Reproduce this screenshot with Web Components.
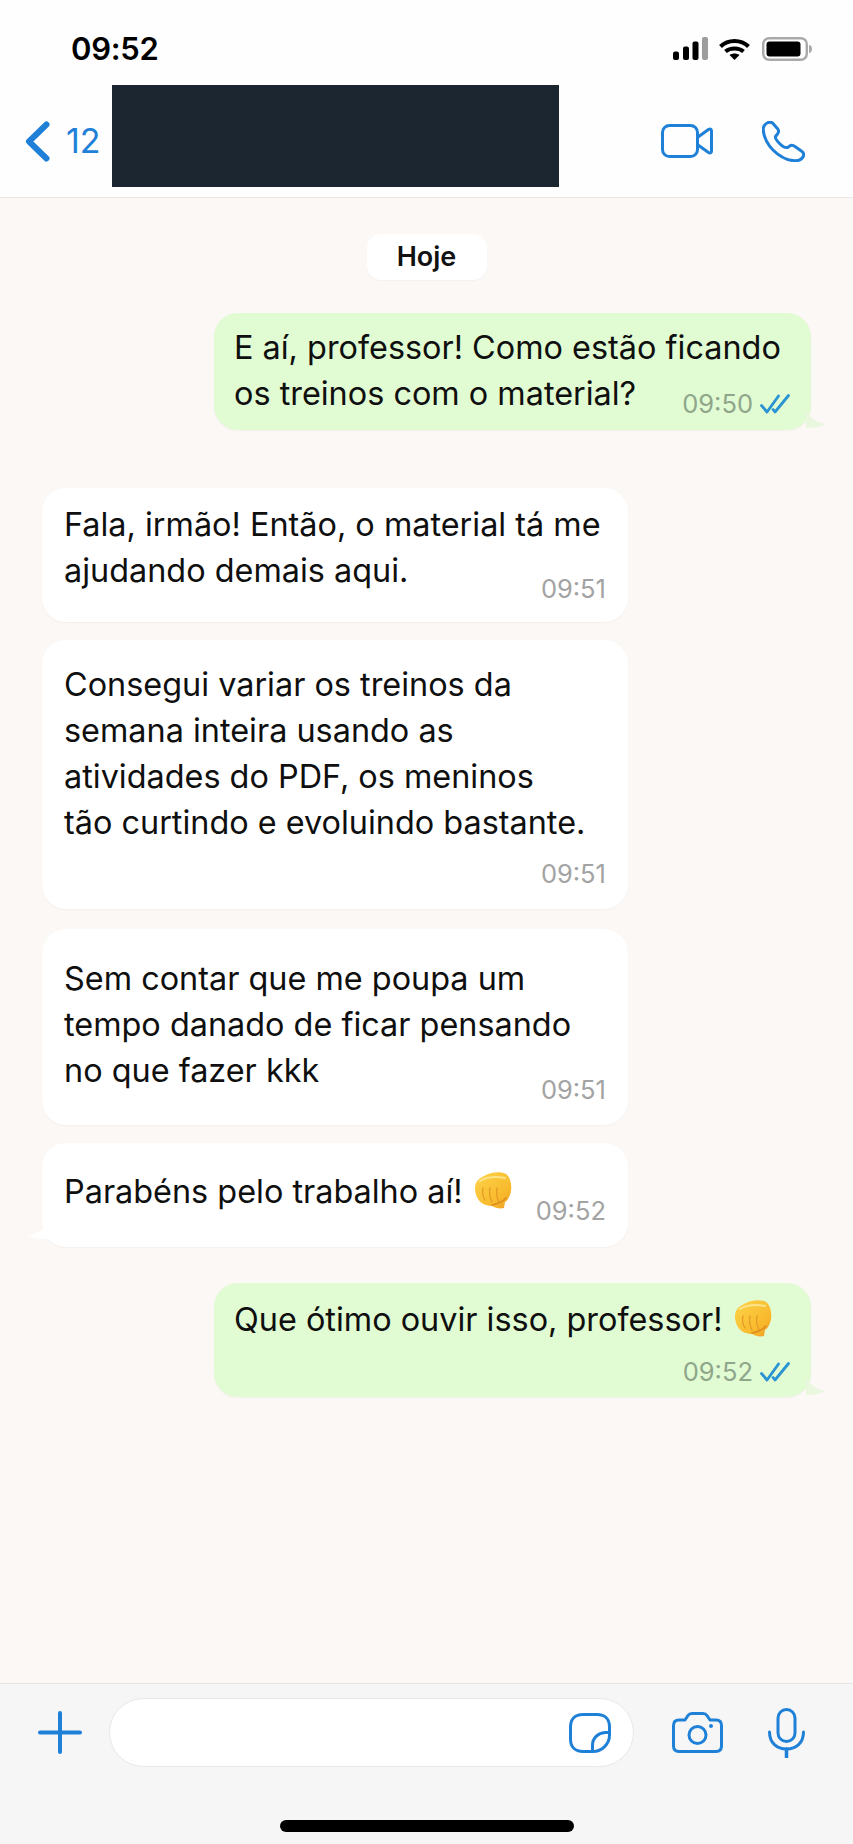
<!DOCTYPE html>
<html lang="pt-BR">
<head>
<meta charset="utf-8">
<title>Conversa</title>
<style>
  html, body { margin: 0; height: 100%; }
  body { font-family: Inter, "Liberation Sans", sans-serif; color: #0e0f0e; overflow: hidden; }
  wa-app { height: 1844px; }
</style>
</head>
<body>
<wa-app>
  <status-bar slot="top" time="09:52"></status-bar>
  <chat-header slot="top" count="12"></chat-header>

  <date-pill>Hoje</date-pill>

  <chat-bubble side="out" time="09:50" tail style="margin-top:33px;--top:12px;--bottom:14px;--meta:-26px">E aí, professor! Como estão ficando<br>os treinos com o material?</chat-bubble>

  <chat-bubble side="in" time="09:51" style="margin-top:58px;--top:14px;--bottom:21px;--meta:-18px">Fala, irmão! Então, o material tá me<br>ajudando demais aqui.</chat-bubble>
  <chat-bubble side="in" time="09:51" style="margin-top:18px;--top:22px;--bottom:23px;--meta:15px">Consegui variar os treinos da<br>semana inteira usando as<br>atividades do PDF, os meninos<br>tão curtindo e evoluindo bastante.</chat-bubble>
  <chat-bubble side="in" time="09:51" style="margin-top:20px;--top:27px;--bottom:23px;--meta:-17px">Sem contar que me poupa um<br>tempo danado de ficar pensando<br>no que fazer kkk</chat-bubble>
  <chat-bubble side="in" time="09:52" tail style="margin-top:18px;--top:26px;--bottom:24px;--meta:-17px">Parabéns pelo trabalho aí! <fist-emoji></fist-emoji></chat-bubble>

  <chat-bubble side="out" time="09:52" tail style="margin-top:36px;--top:14px;--bottom:13px;--meta:16px">Que ótimo ouvir isso, professor! <fist-emoji></fist-emoji></chat-bubble>

  <chat-composer slot="bottom"></chat-composer>
</wa-app>

<script>
class WaApp extends HTMLElement {
  connectedCallback() {
    this.attachShadow({ mode: 'open' });
    this.shadowRoot.innerHTML = `
      <style>
        :host { display: flex; flex-direction: column; width: 853px; background: #fbf8f5; }
        .log {
          flex: 1;
          display: flex;
          flex-direction: column;
          padding: 36px 42px 0 42px;
          min-height: 0;
        }
      </style>
      <slot name="top"></slot>
      <div class="log"><slot></slot></div>
      <slot name="bottom"></slot>
    `;
  }
}

class StatusBar extends HTMLElement {
  connectedCallback() {
    this.attachShadow({ mode: 'open' });
    this.shadowRoot.innerHTML = `
      <style>
        :host { display: flex; height: 70px; box-sizing: border-box; padding: 37px 41px 0 71px; background: #fefefe; }
        .time { font-size: 31px; font-weight: 600; line-height: 24px; color: #000; letter-spacing: -0.3px; }
        .icons { margin-left: auto; display: flex; align-items: flex-start; }
        svg { display: block; }
        .wifi { margin-left: 11px; }
        .battery { margin-left: 12px; }
      </style>
      <div class="time">${this.getAttribute('time')}</div>
      <div class="icons">
        <svg width="35" height="23" viewBox="0 0 35 23">
          <rect x="0" y="14.5" width="6" height="8.5" rx="2" fill="#000"/>
          <rect x="10" y="9.5" width="6" height="13.5" rx="2" fill="#000"/>
          <rect x="19.5" y="4.5" width="6" height="18.5" rx="2" fill="#000"/>
          <rect x="29" y="0" width="6" height="23" rx="2" fill="#9d9d9d"/>
        </svg>
        <svg class="wifi" width="31" height="23" viewBox="0 0 31 23" fill="none" stroke="#000" stroke-width="4">
          <path d="M1.5 9.5C9 2 22 2 29.5 9.5"/>
          <path d="M6.5 14.5C11 10.5 20 10.5 24.5 14.5"/>
          <path d="M10.5 18C13.5 16 17.5 16 20.5 18L15.5 23Z" fill="#000" stroke="none"/>
        </svg>
        <svg class="battery" width="50" height="24" viewBox="0 0 50 24">
          <rect x="1.2" y="1.2" width="43.6" height="21.6" rx="6" fill="none" stroke="#a9a9a9" stroke-width="2.4"/>
          <rect x="4.5" y="4.5" width="34" height="15" rx="3" fill="#000"/>
          <path d="M47 8c2 0 3 2 3 4s-1 4-3 4z" fill="#a9a9a9"/>
        </svg>
      </div>
    `;
  }
}

class ChatHeader extends HTMLElement {
  connectedCallback() {
    this.attachShadow({ mode: 'open' });
    this.shadowRoot.innerHTML = `
      <style>
        :host {
          display: flex;
          align-items: center;
          height: 128px;
          box-sizing: border-box;
          padding: 15px 0 0 25px;
          background: #fefefe;
          border-bottom: 1px solid #e9e7e4;
          color: #1f80d8;
        }
        svg { display: block; flex: none; }
        .count { margin-left: 16px; width: 46px; font-size: 34px; line-height: 40px; }
        .name { align-self: flex-start; width: 447px; height: 102px; background: #1c2630; }
        .video { margin-left: 102px; }
        .phone { margin-left: 49px; }
      </style>
      <svg width="25" height="41" viewBox="0 0 25 41" fill="none" stroke="currentColor" stroke-width="6" stroke-linecap="round" stroke-linejoin="round">
        <path d="M21.5 3.5L4 20.5L21.5 37.5"/>
      </svg>
      <span class="count">${this.getAttribute('count')}</span>
      <div class="name"></div>
      <svg class="video" width="52" height="34" viewBox="0 0 52 34" fill="none" stroke="currentColor" stroke-width="3" stroke-linejoin="round">
        <rect x="1.5" y="1.5" width="35" height="31" rx="7"/>
        <path d="M37 13L47.5 5.5C49.5 4.4 50.5 5.5 50.5 7V27C50.5 28.5 49.5 29.6 47.5 28.5L37 21"/>
      </svg>
      <svg class="phone" width="43" height="41" viewBox="0 0 43 41" fill="none" stroke="currentColor" stroke-width="3" stroke-linejoin="round">
        <path d="M6 1.5C3 3 1 5.5 1.2 9C1.8 15 5 23 11 29C17 35 25 39.5 33 39.8C37 40 40 38 41.5 35C42 33 41.5 31.5 40 30.5L33 25.5C31 24 29 24 27.5 25.2L25.5 26.5C23 27 20 25 17.5 22.5C15 20 13 17 13.5 15.5L15.5 13C16.8 11.3 16.8 9.5 15.8 8L11 2.5C9.8 1.2 7.8 1 6 1.5Z"/>
      </svg>
    `;
  }
}

class DatePill extends HTMLElement {
  connectedCallback() {
    this.attachShadow({ mode: 'open' });
    this.shadowRoot.innerHTML = `
      <style>
        :host {
          display: block;
          align-self: center;
          width: 120px;
          height: 46px;
          border-radius: 14px;
          background: #fff;
          text-align: center;
          font-size: 27px;
          font-weight: 600;
          line-height: 46px;
          color: #111;
          box-shadow: 0 1px 1px rgba(0, 0, 0, 0.03);
        }
      </style>
      <slot></slot>
    `;
  }
}

class ChatBubble extends HTMLElement {
  connectedCallback() {
    const side = this.getAttribute('side');
    const tail = this.hasAttribute('tail');
    this.attachShadow({ mode: 'open' });
    this.shadowRoot.innerHTML = `
      <style>
        :host { display: block; position: relative; flex: none; }
        :host([side="in"]) { width: 586px; align-self: flex-start; --bg: #fff; --time: #a3a3a3; }
        :host([side="out"]) { width: 597px; align-self: flex-end; --bg: #e1fbd2; --time: #8fa68b; }
        .bubble {
          display: flex;
          flex-direction: column;
          padding: var(--top) 21px var(--bottom) 20px;
          background: var(--bg);
          border-radius: 24px;
          box-shadow: 0 1px 2px rgba(0, 0, 0, 0.04);
        }
        :host([side="in"]) .bubble { padding-left: 22px; padding-right: 22px; }
        .text { font-size: 32.4px; line-height: 46px; white-space: nowrap; }
        .meta {
          align-self: flex-end;
          display: flex;
          align-items: center;
          gap: 7px;
          height: 25px;
          margin-top: var(--meta);
          font-size: 25.5px;
          color: var(--time);
        }
        .tail { position: absolute; bottom: 0; display: block; }
        :host([side="out"]) .tail { right: -15px; bottom: 2px; }
        :host([side="in"]) .tail { left: -14px; bottom: 8px; }
      </style>
      <div class="bubble">
        <div class="text"><slot></slot></div>
        <div class="meta">
          <span>${this.getAttribute('time')}</span>
          ${side === 'out' ? `
          <svg width="30" height="20" viewBox="0 0 30 20" fill="none" stroke="#2a94d2" stroke-width="2.8" stroke-linecap="round" stroke-linejoin="round">
            <path d="M1.5 11.5L7 18L18.5 2"/>
            <path d="M13 15.5L15 18L28.5 1.5"/>
          </svg>` : ''}
        </div>
      </div>
      ${!tail ? '' : side === 'out' ? `
      <svg class="tail" width="20" height="18" viewBox="0 0 20 18"><path d="M0 0C3 6 9 13 20 14C14 17 6 18 0 18Z" fill="#e8f7de"/></svg>` : `
      <svg class="tail" width="20" height="16" viewBox="0 0 20 16"><path d="M20 0C17 6 9 12 0 12C6 16 14 16 20 16Z" fill="#fff"/></svg>`}
    `;
  }
}

class FistEmoji extends HTMLElement {
  connectedCallback() {
    this.attachShadow({ mode: 'open' });
    this.shadowRoot.innerHTML = `
      <style>
        :host { display: inline-block; width: 38px; height: 38px; vertical-align: -6px; margin-left: 2px; }
        svg { display: block; }
      </style>
      <svg width="38" height="38" viewBox="0 0 38 38">
        <defs>
          <linearGradient id="f" x1="0" y1="0" x2="1" y2="1">
            <stop offset="0" stop-color="#fdd44a"/>
            <stop offset="0.7" stop-color="#f8b92c"/>
            <stop offset="1" stop-color="#ee9a22"/>
          </linearGradient>
        </defs>
        <path d="M10 5C16 1 27 0 32 3C36 6 38 13 37 20C36 26 33 30 31 31L30 37C26 38 21 37 18 35C13 35 7 33 4 28C1 23 0 17 2 12C3 9 6 7 10 5Z" fill="url(#f)"/>
        <path d="M9 17C8 21 9 26 11 29M16 17C15 22 16 27 18 31M23 17C22 22 23 27 25 31" fill="none" stroke="#e79c28" stroke-width="1.4" stroke-linecap="round"/>
        <path d="M6 10C11 7 20 5 31 7" fill="none" stroke="#fde48a" stroke-width="2" stroke-linecap="round"/>
        <path d="M18 34C23 33 28 32 32 27" fill="none" stroke="#dc8b1d" stroke-width="1.4" stroke-linecap="round"/>
      </svg>
    `;
  }
}

class ChatComposer extends HTMLElement {
  connectedCallback() {
    this.attachShadow({ mode: 'open' });
    this.shadowRoot.innerHTML = `
      <style>
        :host {
          display: block;
          height: 161px;
          box-sizing: border-box;
          padding-top: 14px;
          background: #f6f6f6;
          border-top: 1px solid #e5e4e2;
          color: #1f80d8;
        }
        .row { display: flex; align-items: center; padding-left: 38px; }
        svg { display: block; flex: none; }
        .field {
          width: 525px;
          height: 69px;
          box-sizing: border-box;
          margin-left: 27px;
          padding-right: 22px;
          display: flex;
          align-items: center;
          justify-content: flex-end;
          background: #fff;
          border: 1px solid #e8e8e8;
          border-radius: 35px;
        }
        .camera { margin-left: 38px; }
        .mic { margin-left: 45px; }
        .home { width: 294px; height: 12px; margin: 53px auto 0; background: #000; border-radius: 6px; }
      </style>
      <div class="row">
        <svg width="44" height="43" viewBox="0 0 44 43" fill="none" stroke="currentColor" stroke-width="4" stroke-linecap="round">
          <path d="M22 2V41M2 21.5H42"/>
        </svg>
        <div class="field">
          <svg width="42" height="40" viewBox="0 0 42 40" fill="none" stroke="currentColor" stroke-width="3" stroke-linejoin="round">
            <path d="M14 1.5H28C36 1.5 40.5 6 40.5 14V22C40.5 31 33 38.5 24 38.5H14C6 38.5 1.5 34 1.5 26V14C1.5 6 6 1.5 14 1.5Z"/>
            <path d="M23.5 38V32C23.5 25 29 20 36 19.5H40.5"/>
          </svg>
        </div>
        <svg class="camera" width="51" height="41" viewBox="0 0 51 41" fill="none" stroke="currentColor" stroke-width="3" stroke-linejoin="round">
          <path d="M7 8H13L16 3.5C17 2 18 1.5 20 1.5H31C33 1.5 34 2 35 3.5L38 8H44C47.5 8 49.5 10 49.5 13.5V34C49.5 37.5 47.5 39.5 44 39.5H7C3.5 39.5 1.5 37.5 1.5 34V13.5C1.5 10 3.5 8 7 8Z"/>
          <circle cx="25.5" cy="23" r="8.5"/>
          <circle cx="39" cy="14" r="2" fill="currentColor" stroke="none"/>
        </svg>
        <svg class="mic" width="37" height="50" viewBox="0 0 37 50" fill="none" stroke="currentColor" stroke-width="3" stroke-linecap="round">
          <rect x="10" y="1.5" width="17" height="32" rx="8.5"/>
          <path d="M1.5 24C1.5 35 9 41 18.5 41C28 41 35.5 35 35.5 24"/>
          <path d="M18.5 41V49" stroke-width="3.5"/>
        </svg>
      </div>
      <div class="home"></div>
    `;
  }
}

customElements.define('wa-app', WaApp);
customElements.define('status-bar', StatusBar);
customElements.define('chat-header', ChatHeader);
customElements.define('date-pill', DatePill);
customElements.define('chat-bubble', ChatBubble);
customElements.define('fist-emoji', FistEmoji);
customElements.define('chat-composer', ChatComposer);
</script>
</body>
</html>
